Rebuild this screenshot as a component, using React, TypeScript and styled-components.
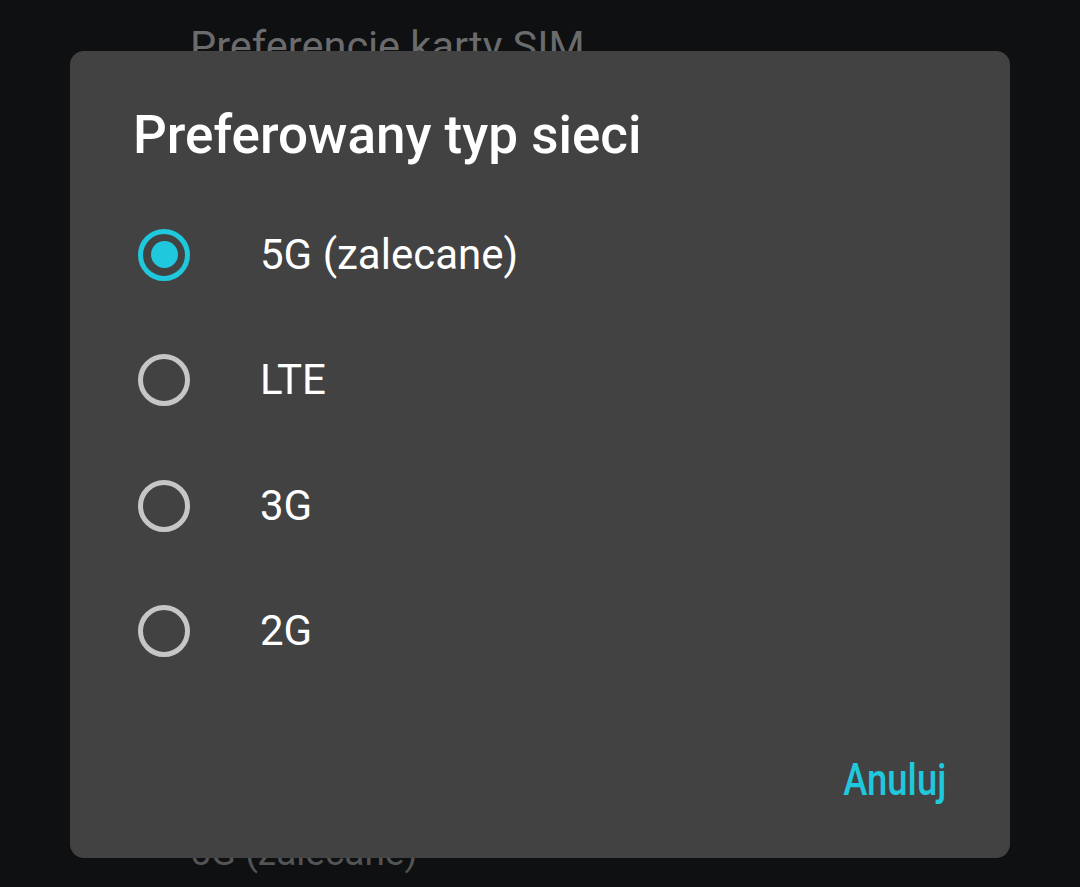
import React from "react";
import styled, { createGlobalStyle } from "styled-components";

const GlobalStyle = createGlobalStyle`
  html, body {
    margin: 0;
    padding: 0;
    background: #0e1012;
    font-family: Roboto, "Noto Sans", Arial, sans-serif;
    overflow: hidden;
  }
`;

const Screen = styled.div`
  position: relative;
  width: 1080px;
  height: 887px;
  background: #0e1012;
  overflow: hidden;
`;

const SettingsList = styled.div`
  height: 100%;
  box-sizing: border-box;
  display: flex;
  flex-direction: column;
  justify-content: space-between;
  padding: 20px 0 8px 190px;
`;

const SettingText = styled.div<{ $tone: string; $size: number }>`
  height: 52px;
  line-height: 52px;
  font-size: ${(p) => p.$size}px;
  color: ${(p) => p.$tone};
  white-space: nowrap;
`;

const Narrow = styled.span<{ $scale: number; $origin?: string }>`
  display: inline-block;
  transform: scaleX(${(p) => p.$scale});
  transform-origin: ${(p) => p.$origin ?? "left"} center;
  white-space: nowrap;
`;

const Dialog = styled.div`
  position: absolute;
  left: 70px;
  top: 51px;
  width: 940px;
  height: 807px;
  box-sizing: border-box;
  background: #424242;
  border-radius: 14px;
  display: flex;
  flex-direction: column;
  padding-top: 54px;
`;

const Title = styled.h2`
  margin: 0 0 27px 0;
  padding-left: 63px;
  height: 60px;
  line-height: 60px;
  font-size: 53px;
  font-weight: 500;
  color: #ffffff;
  white-space: nowrap;
`;

const Options = styled.div`
  display: flex;
  flex-direction: column;
`;

const OptionRow = styled.label`
  height: 125.5px;
  display: flex;
  align-items: center;
  padding-left: 68px;
  gap: 70px;
  cursor: pointer;
`;

const Radio = styled.span<{ $checked: boolean }>`
  width: 52px;
  height: 52px;
  box-sizing: border-box;
  border-radius: 50%;
  border: 5.5px solid ${(p) => (p.$checked ? "#1fc8dc" : "#c6c6c6")};
  display: flex;
  align-items: center;
  justify-content: center;
  flex-shrink: 0;
  &::after {
    content: "";
    width: 27px;
    height: 27px;
    border-radius: 50%;
    background: #1fc8dc;
    display: ${(p) => (p.$checked ? "block" : "none")};
  }
`;

const OptionLabel = styled.span`
  font-size: 42px;
  line-height: 52px;
  color: #ffffff;
  white-space: nowrap;
`;

const Actions = styled.div`
  margin-top: auto;
  margin-bottom: 54px;
  display: flex;
  justify-content: flex-end;
  padding-right: 64px;
`;

const TextButton = styled.button`
  background: none;
  border: none;
  padding: 0;
  height: 48px;
  line-height: 48px;
  font-family: inherit;
  font-size: 45px;
  font-weight: 500;
  color: #1fc8dc;
  cursor: pointer;
`;

const options = ["5G (zalecane)", "LTE", "3G", "2G"];

export default function App() {
  const [selected, setSelected] = React.useState(0);
  return (
    <Screen>
      <GlobalStyle />
      <SettingsList>
        <SettingText $tone="#6b6b6b" $size={41.5}>
          Preferencje karty SIM
        </SettingText>
        <SettingText $tone="#545454" $size={37}>
          5G (zalecane)
        </SettingText>
      </SettingsList>
      <Dialog role="dialog">
        <Title>Preferowany typ sieci</Title>
        <Options>
          {options.map((o, i) => (
            <OptionRow key={o} onClick={() => setSelected(i)}>
              <Radio $checked={selected === i} />
              <OptionLabel>{o}</OptionLabel>
            </OptionRow>
          ))}
        </Options>
        <Actions>
          <TextButton>
            <Narrow $scale={0.81} $origin="right">
              Anuluj
            </Narrow>
          </TextButton>
        </Actions>
      </Dialog>
    </Screen>
  );
}
